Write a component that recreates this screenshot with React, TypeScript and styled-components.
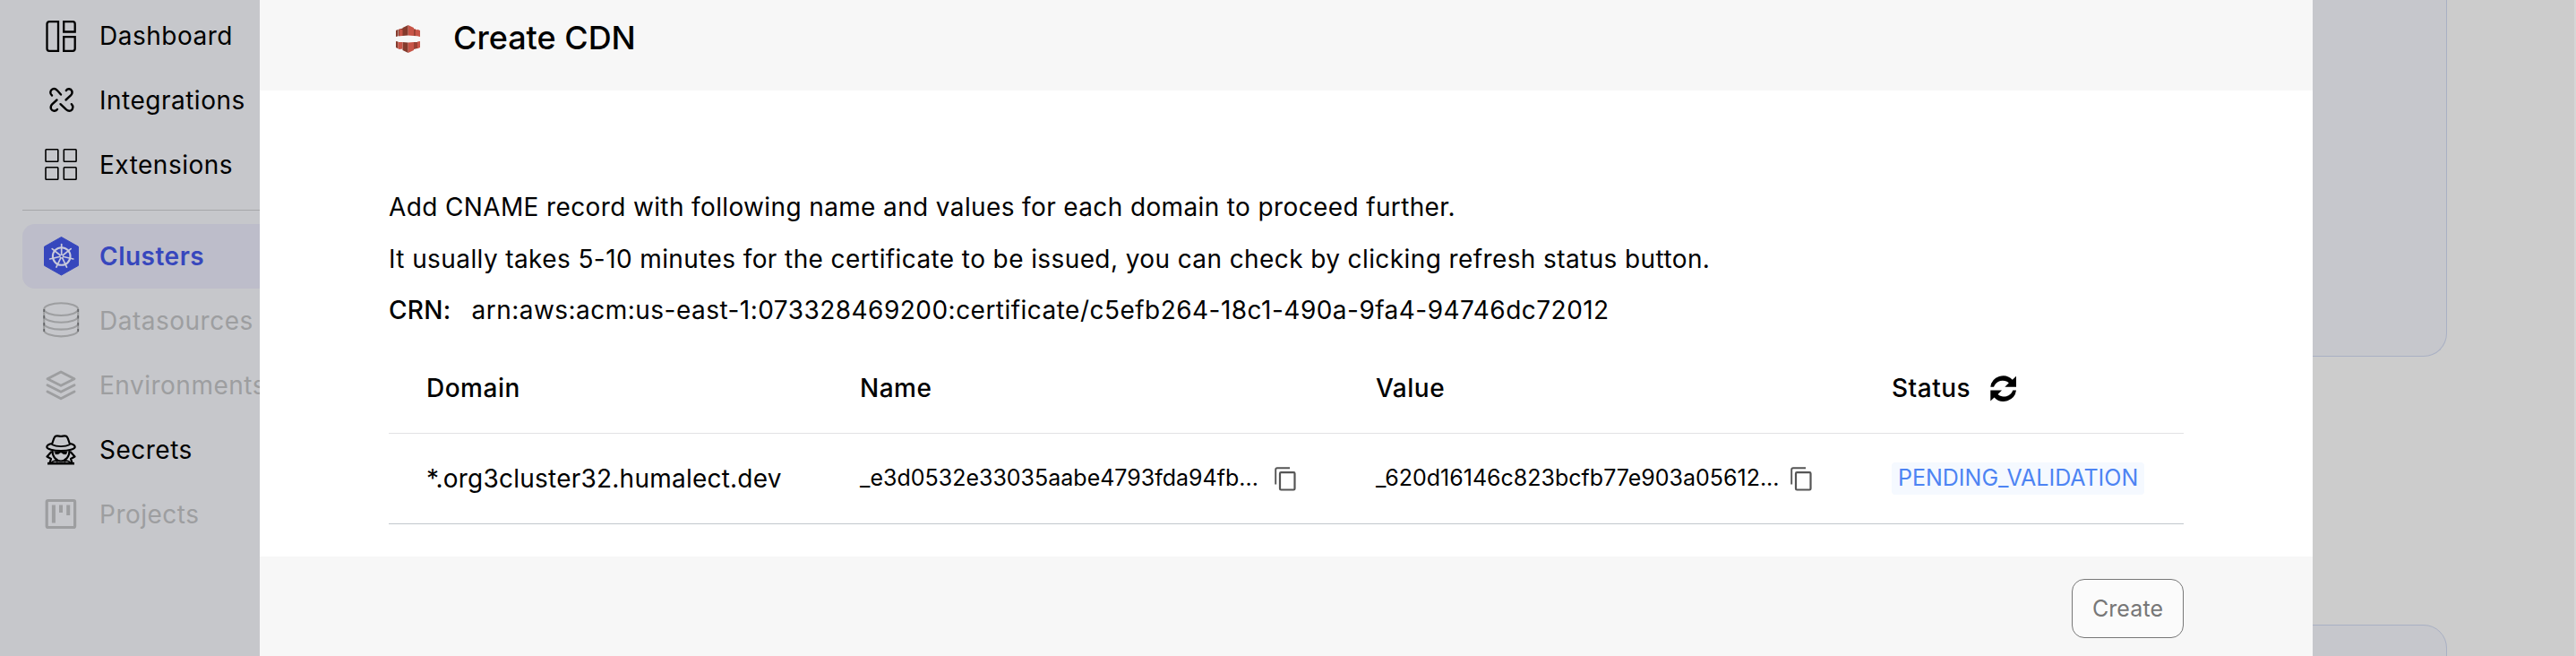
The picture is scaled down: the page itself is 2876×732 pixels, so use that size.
import React from "react";
import styled, { createGlobalStyle, css } from "styled-components";

const GlobalStyle = createGlobalStyle`
  * { box-sizing: border-box; }
  body {
    margin: 0;
    background: #cccccc;
    color: #000;
    font-family: Inter, "Liberation Sans", sans-serif;
    font-size: 28px;
  }
`;

/* ---------- page behind the dialog ---------- */

const Page = styled.div`
  position: relative;
  display: flex;
  width: 2876px;
  height: 732px;
  overflow: hidden;
  background: #cccccc;
`;

const Sidebar = styled.nav`
  flex: none;
  width: 330px;
  height: 100%;
  padding: 4px 0 0 25px;
  background: #c6c7cb;
`;

const NavGroup = styled.div`
  display: flex;
  flex-direction: column;
`;

type NavState = "normal" | "active" | "disabled";

const navColors: Record<NavState, string> = {
  normal: "#000000",
  active: "#3747bd",
  disabled: "#9d9ea0",
};

const NavItem = styled.a<{ $state: NavState }>`
  display: flex;
  align-items: center;
  height: 72px;
  padding-left: 23px;
  border-radius: 14px 0 0 14px;
  color: ${({ $state }) => navColors[$state]};
  letter-spacing: 0.5px;
  white-space: nowrap;
  ${({ $state }) =>
    $state === "active" &&
    css`
      background: #bdbdca;
      font-weight: 600;
    `}
`;

const NavIcon = styled.span`
  display: flex;
  flex: none;
  width: 63px;
  height: 44px;
`;

const NavDivider = styled.hr`
  height: 1px;
  margin: 14px 0 15px;
  border: 0;
  background: #a5a6a9;
`;

const Main = styled.main`
  display: flex;
  flex: 1;
  flex-direction: column;
  gap: 299px;
  padding: 0 142px 0 80px;
`;

const Card = styled.section<{ $edge: "top" | "bottom" }>`
  height: ${({ $edge }) => ($edge === "top" ? 398 : 200)}px;
  flex: none;
  border: 1px solid #a9b0c4;
  background: #c6c7cc;
  ${({ $edge }) =>
    $edge === "top"
      ? css`
          border-top: 0;
          border-radius: 0 0 26px 26px;
        `
      : css`
          border-radius: 26px 26px 0 0;
        `}
`;

const ScrollTrack = styled.div`
  flex: none;
  width: 2px;
  background: #d6d6d6;
`;

/* ---------- dialog ---------- */

const Dialog = styled.div`
  position: absolute;
  top: 0;
  left: 290px;
  display: flex;
  flex-direction: column;
  width: 2292px;
  height: 732px;
  background: #fff;
`;

const DialogHeader = styled.header`
  display: flex;
  flex: none;
  align-items: center;
  gap: 35px;
  height: 101px;
  padding: 0 0 14px 152px;
  background: #f7f7f7;
`;

const Title = styled.h1`
  margin: -4px 0 0;
  font-size: 36px;
  font-weight: 500;
  line-height: 44px;
`;

const DialogBody = styled.div`
  flex: 1;
  padding: 101px 144px 0;
`;

const Instruction = styled.p<{ $tracking?: number }>`
  height: 57.5px;
  margin: 0;
  letter-spacing: ${({ $tracking = 0.4 }) => $tracking}px;
  line-height: 58px;
  white-space: nowrap;
`;

const CrnLabel = styled.span`
  margin-right: 23px;
  letter-spacing: 0.3px;
  font-weight: 500;
`;

const Row = styled.div<{ $head?: boolean }>`
  display: grid;
  grid-template-columns: 482px 576px 576px 1fr;
  align-items: center;
  height: 101px;
  border-bottom: 1px solid ${({ $head }) => ($head ? "#e2e2e4" : "#c1c7cd")};
  font-weight: ${({ $head }) => ($head ? 500 : 400)};
  letter-spacing: ${({ $head }) => ($head ? 0.5 : 0)}px;
`;

const Table = styled.div`
  display: flex;
  flex-direction: column;
  margin-top: 8.5px;
`;

const Cell = styled.div`
  display: flex;
  align-items: center;
  padding-left: 44px;
  white-space: nowrap;

  &:first-child {
    padding-left: 42px;
  }
`;

const Domain = styled.span`
  letter-spacing: 0.23px;
`;

const RecordText = styled.span`
  width: 463px;
  margin-top: -3px;
  font-size: 25px;
`;

const IconButton = styled.button`
  display: flex;
  padding: 0;
  border: 0;
  background: none;
  color: #555;
`;

const RefreshButton = styled(IconButton)`
  margin: 2px 0 0 21.5px;
  color: inherit;
`;

const StatusBadge = styled.span`
  height: 36px;
  padding: 0 7px;
  border-radius: 4px;
  background: #f5f9ff;
  color: #4d84f3;
  font-size: 25px;
  line-height: 35px;
`;

const DialogFooter = styled.footer`
  display: flex;
  flex: none;
  justify-content: flex-end;
  height: 111px;
  padding: 25px 144px 0 0;
  background: #f7f7f7;
`;

const CreateButton = styled.button`
  width: 125px;
  height: 66px;
  padding: 0;
  border: 1px solid #777;
  border-radius: 14px;
  background: #fbfbfb;
  color: #777;
  font-family: inherit;
  font-size: 25px;
  letter-spacing: 0.1px;
`;

/* ---------- icons ---------- */

const DashboardIcon = () => (
  <svg width="40" height="44" viewBox="0 0 40 44" fill="none" stroke="currentColor" strokeWidth="2.3">
    <path d="M17 6.2V38.8H7a2.5 2.5 0 0 1-2.5-2.5V8.7a2.5 2.5 0 0 1 2.5-2.5zM23.2 6.2H33.2a2.5 2.5 0 0 1 2.5 2.5V17.5H23.2zM23.2 23.2H35.7V36.3a2.5 2.5 0 0 1-2.5 2.5H23.2z" />
  </svg>
);

const IntegrationsIcon = () => (
  <svg width="40" height="44" viewBox="0 0 40 44" fill="none" stroke="currentColor" strokeWidth="2.4" strokeLinecap="round">
    <path d="M10 16.5C7.5 14.5 7.8 11 10.5 9.5C12.5 8.6 14.3 9.3 15.8 10.8L20 15.5" />
    <path d="M25.8 11C27.5 8.5 31 8.8 32.3 11.5C33 13.5 32.3 15.2 31 16.5L25.5 21.5" />
    <path d="M16 32C14 34.6 10.5 34.3 9 31.5C8.2 29.5 9 27.7 10.2 26.3L15.5 21.5" />
    <path d="M31.8 26.2C34.2 28.5 33.7 32 31 33.5C29 34.3 27.3 33.5 25.8 32.2L19.5 26.2" />
  </svg>
);

const ExtensionsIcon = () => (
  <svg width="40" height="44" viewBox="0 0 40 44" fill="none" stroke="currentColor" strokeWidth="1.6">
    <rect x="3" y="4.8" width="13.8" height="13.5" rx=".7" />
    <rect x="23.3" y="4.8" width="13.8" height="13.5" rx=".7" />
    <rect x="3" y="24.8" width="13.8" height="13.5" rx=".7" />
    <rect x="23.3" y="24.8" width="13.8" height="13.5" rx=".7" />
  </svg>
);

const spokes = Array.from({ length: 7 }, (_, i) => (i * 360) / 7);

const ClustersIcon = () => (
  <svg width="42" height="44" viewBox="0 0 42 44">
    <path d="M20.500 .5 39.500 11.200V32.300L20.500 43 1.500 32.300V11.200z" fill="#3747bd" stroke="#3747bd" strokeLinejoin="round" />
    <g fill="none" stroke="#c9cadb" strokeLinecap="round" transform="translate(20.700 22)">
      <circle r="9.8" strokeWidth="2.1" />
      <circle r="1.8" strokeWidth="1.2" />
      {spokes.map((a) => (
        <path key={a} d="M0-2.400V-13.400" strokeWidth="1.7" transform={`rotate(${a})`} />
      ))}
    </g>
  </svg>
);

const DatasourcesIcon = () => (
  <svg width="42" height="44" viewBox="0 0 42 44" fill="none" stroke="currentColor" strokeWidth="2.1">
    <ellipse cx="20.2" cy="9.1" rx="19" ry="6.9" />
    <path d="M1.2 9.1V32.5C1.2 36.2 9.7 39.4 20.2 39.4S39.2 36.2 39.2 32.5V9.1" />
    <path d="M1.2 17C1.2 20.7 9.7 23.8 20.2 23.8S39.2 20.7 39.2 17M1.2 25C1.2 28.7 9.7 31.6 20.2 31.6S39.2 28.7 39.2 25" />
    <path d="M1.2 9v3M1.2 16v3.5M1.2 24v3.5M1.2 31v3M39.2 9v3M39.2 16v3.5M39.2 24v3.5M39.2 31v3" stroke="#66676a" strokeWidth="1.7" />
  </svg>
);

const EnvironmentsIcon = () => (
  <svg width="40" height="44" viewBox="0 0 40 44" fill="none" stroke="currentColor" strokeWidth="2.9" strokeLinejoin="round" strokeLinecap="round">
    <path d="M20 7 35 14.7 20 22.2 5 14.7z" />
    <path d="M5 21.7 20 29.3 35 21.7M5 29 20 36.7 35 29" />
  </svg>
);

const SecretsIcon = () => (
  <svg width="40" height="44" viewBox="0 0 40 44" fill="none" stroke="currentColor" strokeWidth="2.2" strokeLinejoin="round" strokeLinecap="round">
    <path d="M10 15.5C11.5 12 12 8 14 6.7C16 5.6 18 6.9 20 6.9S24 5.6 26 6.7C28 8 28.5 12 30 15.5" />
    <path d="M10 15C6.5 15.3 4.3 17.2 4.3 18.8C4.3 21 11 23 20 23S35.700 21 35.700 18.800C35.7 17.2 33.5 15.3 30 15" />
    <path d="M10.5 16.3C15 18.8 25 18.8 29.5 16.3" strokeWidth="1.7" />
    <path d="M10.500 23.500C10.500 29.500 15 34.500 20 34.500S29.500 29.500 29.500 23.500" />
    <path d="M9 24.5 4.500 29.500 9 32 7.500 36.500M31 24.500 35.500 29.500 31 32 32.500 36.500" />
    <path d="M5 37.200H35" strokeLinecap="butt" strokeWidth="2.6" />
    <path d="M9 36.500C12 33.500 14 33.500 16 35M31 36.500C28 33.500 26 33.500 24 35" strokeWidth="1.6" />
    <path d="M13 24H27L26 26.800H23L20 24.800 17 26.800H14z" fill="currentColor" strokeWidth=".4" />
  </svg>
);

const ProjectsIcon = () => (
  <svg width="40" height="44" viewBox="0 0 40 44" fill="none" stroke="currentColor">
    <rect x="4.2" y="6.5" width="31.4" height="30" rx="1.5" strokeWidth="3.2" />
    <path d="M11.9 11.500V31.500M20 11.500V20M28.200 11.500V23" strokeWidth="4" />
  </svg>
);

const CdnLogo = () => (
  <svg width="29" height="33" viewBox="0 0 29 33">
    <g fill="#843a2c">
      <path d="M0 7 2.500 5.800V13.200L0 14zM3 6 7.500 4.500V12.800L3 13.200zM7.500 4 13.700 1V12.500L7.500 12.900z" />
      <path d="M0 19 2.500 19.600V27.200L0 26zM7.500 20 13.700 20.600V32L7.500 29z" />
    </g>
    <g fill="#c75447">
      <path d="M13.700 1 20 4V12.900L13.700 12.500zM20 5 24 6.500V13.300L20 12.900zM24 5.800 27 7V14L24 13.300zM3.800 5 7.500 6.300V12.900L3.800 13.200z" />
      <path d="M13.700 20.600 20 20V29L13.700 32zM24 19.600 27 19V26L24 27.200zM2.500 20 7.500 20V27.500L3.800 28 2.500 27.200z" />
    </g>
    <path d="M20 6 21.800 5.500V13L20 12.900zM20 20H24V27L20 28z" fill="#994033" />
  </svg>
);

const arrow = "M.3 12.700A14.300 14.300 0 0 1 24.800 4.800L29 .8V12.700H16.300L20.800 8.200A10.500 10.500 0 0 0 4 12.700z";

const RefreshIcon = () => (
  <svg width="30" height="30" viewBox="0 0 30 30" fill="currentColor">
    <path d={arrow} />
    <path d={arrow} transform="rotate(180 14.650 14.600)" />
  </svg>
);

const CopyIcon = () => (
  <svg width="24" height="27" viewBox="0 0 24 27" fill="none" stroke="currentColor">
    <path d="M1.2 19.5V3Q1.2 1.2 3 1.2H17" strokeWidth="1.9" />
    <rect x="6" y="6.2" width="16.5" height="19.3" rx="1.2" strokeWidth="2.2" />
  </svg>
);

/* ---------- content ---------- */

type NavEntry = { label: string; icon: React.ReactNode; state: NavState };

const primaryNav: NavEntry[] = [
  { label: "Dashboard", icon: <DashboardIcon />, state: "normal" },
  { label: "Integrations", icon: <IntegrationsIcon />, state: "normal" },
  { label: "Extensions", icon: <ExtensionsIcon />, state: "normal" },
];

const clusterNav: NavEntry[] = [
  { label: "Clusters", icon: <ClustersIcon />, state: "active" },
  { label: "Datasources", icon: <DatasourcesIcon />, state: "disabled" },
  { label: "Environments", icon: <EnvironmentsIcon />, state: "disabled" },
  { label: "Secrets", icon: <SecretsIcon />, state: "normal" },
  { label: "Projects", icon: <ProjectsIcon />, state: "disabled" },
];

const NavList = ({ entries }: { entries: NavEntry[] }) => (
  <NavGroup>
    {entries.map(({ label, icon, state }) => (
      <NavItem key={label} $state={state}>
        <NavIcon>{icon}</NavIcon>
        {label}
      </NavItem>
    ))}
  </NavGroup>
);

const CopyableCell = ({ text }: { text: string }) => (
  <Cell>
    <RecordText>{text}</RecordText>
    <IconButton aria-label="Copy">
      <CopyIcon />
    </IconButton>
  </Cell>
);

export default function App() {
  return (
    <Page>
      <GlobalStyle />
      <Sidebar>
        <NavList entries={primaryNav} />
        <NavDivider />
        <NavList entries={clusterNav} />
      </Sidebar>
      <Main>
        <Card $edge="top" />
        <Card $edge="bottom" />
      </Main>
      <ScrollTrack />

      <Dialog role="dialog">
        <DialogHeader>
          <CdnLogo />
          <Title>Create CDN</Title>
        </DialogHeader>
        <DialogBody>
          <Instruction $tracking={0.37}>
            Add CNAME record with following name and values for each domain to proceed further.
          </Instruction>
          <Instruction>
            It usually takes 5-10 minutes for the certificate to be issued, you can check by clicking refresh status
            button.
          </Instruction>
          <Instruction $tracking={0.47}>
            <CrnLabel>CRN:</CrnLabel>
            arn:aws:acm:us-east-1:073328469200:certificate/c5efb264-18c1-490a-9fa4-94746dc72012
          </Instruction>
          <Table>
            <Row $head>
              <Cell>Domain</Cell>
              <Cell>Name</Cell>
              <Cell>Value</Cell>
              <Cell>
                Status
                <RefreshButton aria-label="Refresh status">
                  <RefreshIcon />
                </RefreshButton>
              </Cell>
            </Row>
            <Row>
              <Cell>
                <Domain>*.org3cluster32.humalect.dev</Domain>
              </Cell>
              <CopyableCell text="_e3d0532e33035aabe4793fda94fb..." />
              <CopyableCell text="_620d16146c823bcfb77e903a05612..." />
              <Cell>
                <StatusBadge>PENDING_VALIDATION</StatusBadge>
              </Cell>
            </Row>
          </Table>
        </DialogBody>
        <DialogFooter>
          <CreateButton>Create</CreateButton>
        </DialogFooter>
      </Dialog>
    </Page>
  );
}
